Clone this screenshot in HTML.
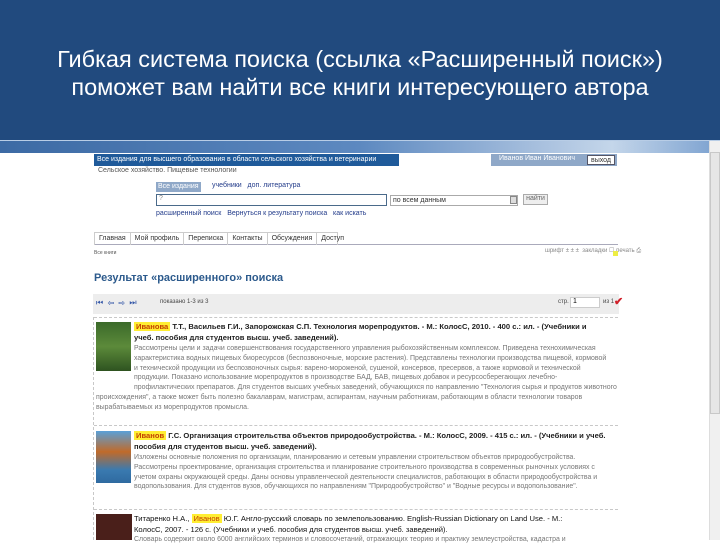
<!DOCTYPE html>
<html><head><meta charset="utf-8"><style>
*{margin:0;padding:0;box-sizing:border-box}
body{width:720px;height:540px;overflow:hidden;background:#fff;font-family:"Liberation Sans",Arial,sans-serif;position:relative}
.a{position:absolute;white-space:nowrap}
#hd{position:absolute;left:0;top:0;width:720px;height:140px;background:#214a7e}
#title{position:absolute;top:45px;width:720px;text-align:center;color:#fff;font-size:23.5px;line-height:28px}
#strip{position:absolute;left:0;top:140px;width:720px;height:13px;background:linear-gradient(90deg,#3c6aa4 0%,#5d89c0 50%,#a8c0de 75%,#c4d6ea 85%,#7aa0cf 100%);border-top:1px solid #b8cde6}
#sb{position:absolute;left:709px;top:141px;width:11px;height:399px;background:#f0f0f0;border-left:1px solid #ddd}
#thumb{position:absolute;left:710px;top:152px;width:10px;height:262px;background:#e6e6e6;border:1px solid #c8c8c8}
.s{font-size:7px;color:#333}
.d{font-size:6.95px;color:#777;line-height:9.8px;position:absolute;white-space:nowrap}
.b{font-size:7.6px;color:#222;font-weight:bold;line-height:11px;position:absolute;white-space:nowrap}
.hl{background:#ffee33;color:#c24000;padding:0 2px}
.dash{position:absolute;left:94px;width:524px;border-top:1px dashed #c8c8c8;height:0}
.tab{display:inline-block;padding:0 4px;border-right:1px solid #ccc;height:12px;line-height:12px}
</style></head><body>
<div id="hd"></div>
<div id="title">Гибкая система поиска (ссылка «Расширенный поиск»)<br>поможет вам найти все книги интересующего автора</div>
<div id="strip"></div>
<div id="sb"></div><div id="thumb"></div>

<div class="a s" style="left:94px;top:154px;width:305px;height:12px;background:#1f5a9a;color:#fff;line-height:12px;padding-left:3px">Все издания для высшего образования в области сельского хозяйства и ветеринарии</div>
<div class="a s" style="left:98px;top:167px;color:#555">Сельское хозяйство. Пищевые технологии</div>
<div class="a" style="left:491px;top:154px;width:126px;height:12px;background:#8fa8c8"></div>
<div class="a s" style="left:499px;top:155px;color:#fff">Иванов Иван Иванович</div>
<div class="a s" style="left:587px;top:155px;width:28px;height:10px;background:#fff;border:1px solid #556;line-height:9px;text-align:center">выход</div>

<div class="a s" style="left:156px;top:182px;background:#8fa8c8;color:#fff;padding:0 2px;height:10px;line-height:10px">Все издания</div>
<div class="a s" style="left:212px;top:182px;color:#223b8a">учебники &nbsp; доп. литература</div>
<div class="a" style="left:156px;top:194px;width:231px;height:12px;border:1px solid #4a6a8a;font-size:7px;color:#888;padding-left:2px">?</div>
<div class="a" style="left:390px;top:195px;width:128px;height:11px;border:1px solid #aaa;font-size:7px;color:#333;padding-left:2px;line-height:9px">по всем данным</div>
<div class="a" style="left:510px;top:196px;width:7px;height:8px;background:#ddd;border:1px solid #888"></div>
<div class="a s" style="left:523px;top:194px;width:25px;height:11px;border:1px solid #aaa;background:#eee;text-align:center;color:#666">найти</div>
<div class="a s" style="left:156px;top:210px;color:#223b8a">расширенный поиск &nbsp; Вернуться к результату поиска &nbsp; как искать</div>

<div class="a s" style="left:94px;top:232px;width:524px;height:13px;border-bottom:1px solid #aab;"><div style="display:inline-block;width:244px;border:1px solid #ccc;border-bottom:none;height:13px"><span class="tab">Главная</span><span class="tab">Мой профиль</span><span class="tab">Переписка</span><span class="tab">Контакты</span><span class="tab" style="border:none">Обсуждения</span><span class="tab" style="border-left:1px solid #ccc;border-right:none">Доступ</span></div></div>
<div class="a" style="left:94px;top:250px;font-size:5px;color:#555">Все книги</div>
<div class="a" style="left:545px;top:247px;font-size:6px;color:#888">шрифт ± ± ± &nbsp;закладки ☐ печать ⎙</div>
<div class="a" style="left:613px;top:251px;width:5px;height:5px;background:#ee4"></div>

<div class="a" style="left:94px;top:272px;font-size:11px;font-weight:bold;color:#2c5a8c">Результат «расширенного» поиска</div>

<div class="a" style="left:93px;top:294px;width:526px;height:20px;background:#ededed"></div>
<div class="a" style="left:96px;top:298px;font-size:8px;color:#3558a8">⏮ &nbsp;⇦ &nbsp;⇨ &nbsp;⏭</div>
<div class="a" style="left:160px;top:299px;font-size:6px;color:#444">показано 1-3 из 3</div>
<div class="a" style="left:558px;top:299px;font-size:6px;color:#444">стр.</div>
<div class="a" style="left:570px;top:297px;width:30px;height:11px;background:#fff;border:1px solid #ccc;font-size:7px;padding-left:2px">1</div>
<div class="a" style="left:603px;top:299px;font-size:6px;color:#444">из 1</div>
<div class="a" style="left:614px;top:295px;font-size:11px;color:#d0202a;font-weight:bold">✔</div>

<div class="dash" style="top:317px"></div>
<div class="a" style="left:93px;top:317px;height:223px;border-left:1px dashed #c8c8c8"></div>
<div class="a" style="left:96px;top:322px;width:35px;height:49px;background:linear-gradient(#3b6a2a,#5c8a3a 50%,#2e5320)"></div>
<div class="b" style="left:134px;top:321px"><span class="hl">Иванова</span> Т.Т., Васильев Г.И., Запорожская С.П. Технология морепродуктов. - М.: КолосС, 2010. - 400 с.: ил. - (Учебники и</div>
<div class="b" style="left:134px;top:332px">учеб. пособия для студентов высш. учеб. заведений).</div>
<div class="d" style="left:134px;top:344px">Рассмотрены цели и задачи совершенствования государственного управления рыбохозяйственным комплексом. Приведена технохимическая<br>характеристика водных пищевых биоресурсов (беспозвоночные, морские растения). Представлены технологии производства пищевой, кормовой<br>и технической продукции из беспозвоночных сырья: варено-мороженой, сушеной, консервов, пресервов, а также кормовой и технической<br>продукции. Показано использование морепродуктов в производстве БАД, БАВ, пищевых добавок и ресурсосберегающих лечебно-<br>профилактических препаратов. Для студентов высших учебных заведений, обучающихся по направлению "Технология сырья и продуктов животного</div>
<div class="d" style="left:96px;top:393px">происхождения", а также может быть полезно бакалаврам, магистрам, аспирантам, научным работникам, работающим в области технологии товаров<br>вырабатываемых из морепродуктов промысла.</div>

<div class="dash" style="top:425px"></div>
<div class="a" style="left:96px;top:431px;width:35px;height:52px;background:linear-gradient(#5aa0d8,#c06a2a 40%,#3a7ab0 75%,#2f6aa0)"></div>
<div class="b" style="left:134px;top:430px"><span class="hl">Иванов</span> Г.С. Организация строительства объектов природообустройства. - М.: КолосС, 2009. - 415 с.: ил. - (Учебники и учеб.</div>
<div class="b" style="left:134px;top:441px">пособия для студентов высш. учеб. заведений).</div>
<div class="d" style="left:134px;top:453px">Изложены основные положения по организации, планированию и сетевым управлении строительством объектов природообустройства.<br>Рассмотрены проектирование, организация строительства и планирование строительного производства в современных рыночных условиях с<br>учетом охраны окружающей среды. Даны основы управленческой деятельности специалистов, работающих в области природообустройства и<br>водопользования. Для студентов вузов, обучающихся по направлениям "Природообустройство" и "Водные ресурсы и водопользование".</div>

<div class="dash" style="top:509px"></div>
<div class="a" style="left:96px;top:514px;width:36px;height:26px;background:#4a1f1a"></div>
<div class="b" style="left:134px;top:513px;font-weight:normal;color:#111">Титаренко Н.А., <span class="hl">Иванов</span> Ю.Г. Англо-русский словарь по землепользованию. English-Russian Dictionary on Land Use. - М.:</div>
<div class="b" style="left:134px;top:524px;font-weight:normal;color:#111">КолосС, 2007. - 126 с. (Учебники и учеб. пособия для студентов высш. учеб. заведений).</div>
<div class="d" style="left:134px;top:535px">Словарь содержит около 6000 английских терминов и словосочетаний, отражающих теорию и практику землеустройства, кадастра и</div>
</body></html>
